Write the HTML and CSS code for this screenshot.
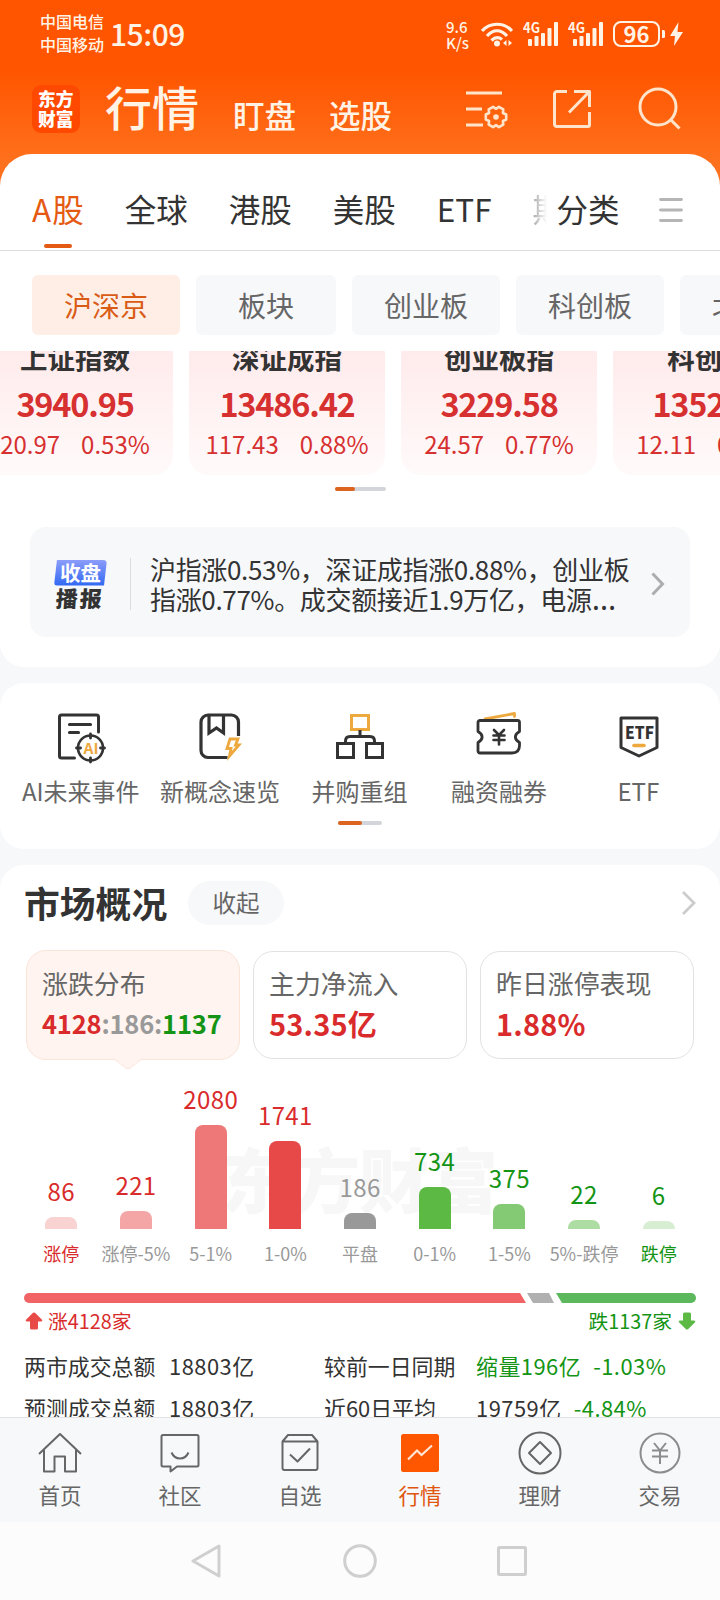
FILE: index.html
```html
<!DOCTYPE html>
<html lang="zh-CN">
<head>
    <meta charset="UTF-8">
    <meta name="viewport" content="width=device-width, initial-scale=1.0">
    <title>行情</title>
    <link rel="stylesheet" href="styles.css">
</head>
<body>
    <header class="top">
        <div class="status">
            <div class="carrier">中国电信<br>中国移动</div>
            <div class="clock">15:09</div>
            <div class="speed">9.6<br>K/s</div>
            <svg class="wifi" width="32" height="26" viewBox="0 0 32 26" fill="none" stroke="#fff3e6" stroke-width="3.200">
                <path d="M1 10C9 1 23 1 31 10"/>
                <path d="M6 15C12 8 20 8 26 15"/>
                <path d="M10.500 19.500C14 16 18 16 21 18.500"/>
                <circle cx="16" cy="22.500" r="3" fill="#fff3e6" stroke="none"/>
                <path d="M22 22l3.500-3v6zM31 22l-3.500-3v6z" fill="#fff3e6" stroke="none"/>
            </svg>
            <svg class="signal" width="36" height="26" viewBox="0 0 36 26" fill="#fff3e6">
                <text x="0" y="12" font-size="14" font-weight="bold" textLength="17" lengthAdjust="spacingAndGlyphs">4G</text>
                <rect x="5" y="18" width="4" height="7" rx="1"/>
                <rect x="11.500" y="15" width="4" height="10" rx="1"/>
                <rect x="18" y="12" width="4" height="13" rx="1"/>
                <rect x="24.500" y="7" width="4" height="18" rx="1"/>
                <rect x="31" y="1" width="4" height="24" rx="1"/>
            </svg>
            <svg class="signal" width="36" height="26" viewBox="0 0 36 26" fill="#fff3e6">
                <text x="0" y="12" font-size="14" font-weight="bold" textLength="17" lengthAdjust="spacingAndGlyphs">4G</text>
                <rect x="5" y="18" width="4" height="7" rx="1"/>
                <rect x="11.500" y="15" width="4" height="10" rx="1"/>
                <rect x="18" y="12" width="4" height="13" rx="1"/>
                <rect x="24.500" y="7" width="4" height="18" rx="1"/>
                <rect x="31" y="1" width="4" height="24" rx="1"/>
            </svg>
            <div class="battery">96</div>
            <svg width="22" height="26" viewBox="0 0 22 26" fill="#fff3e6">
                <path d="M0 9h1.500a1.500 1.500 0 0 1 1.500 1.500v5a1.500 1.500 0 0 1-1.500 1.500H0z"/>
                <path d="M16.500 1L8 15h5l-1 10 9-14h-5.500z"/>
            </svg>
        </div>

        <div class="titlebar">
            <div class="logo">东方<br>财富</div>
            <h1>行情</h1>
            <a class="title-link">盯盘</a>
            <a class="title-link">选股</a>
            <div class="tools">
                <svg width="42" height="40" viewBox="0 0 42 40" fill="none" stroke="#ffe4cc" stroke-width="3">
                    <path d="M0 4h36M0 20h16M0 36h17"/>
                    <path d="M36.900 32L37.300 35.600 32.900 38.100 30 36.200 27.100 38.100 22.700 35.600 23.100 32 19.800 30.500V25.500L23.100 24 22.700 20.400 27.100 17.900 30 19.800 32.900 17.900 37.300 20.400 36.900 24 40.200 25.500V30.500z" stroke-width="2.600" stroke-linejoin="round"/>
                    <circle cx="30" cy="28" r="2.800" fill="#ffe4cc" stroke="none"/>
                </svg>
                <svg width="40" height="40" viewBox="1 0 40 40" fill="none" stroke="#ffe4cc" stroke-width="3" stroke-linejoin="round">
                    <path d="M15 2.500H5a2.500 2.500 0 0 0-2.500 2.500v30a2.500 2.500 0 0 0 2.500 2.500h31a1.500 1.500 0 0 0 1.500-1.500V23"/>
                    <path d="M22 2.500h15.500V18M37 3L17 23.500"/>
                </svg>
                <svg width="44" height="44" viewBox="0 0 44 44" fill="none" stroke="#ffe4cc" stroke-width="3">
                    <circle cx="20" cy="20" r="18"/>
                    <path d="M32.500 32.500l9 9"/>
                </svg>
            </div>
        </div>
    </header>

    <main>
        <section class="panel market">
            <nav class="tabs">
                <a class="tab active"><span class="latin">A</span>股</a>
                <a class="tab">全球</a>
                <a class="tab">港股</a>
                <a class="tab">美股</a>
                <a class="tab">ETF</a>
                <span class="tab cut">期</span>
                <a class="tab sort">分类</a>
                <svg width="24" height="24" viewBox="0 0 24 24" stroke="#b5b5b5" stroke-width="2.800" stroke-linecap="round">
                    <path d="M1.500 1.500h21M1.500 12h21M1.500 22.500h21"/>
                </svg>
            </nav>

            <div class="chips">
                <span class="chip active">沪深京</span>
                <span class="chip narrow">板块</span>
                <span class="chip">创业板</span>
                <span class="chip">科创板</span>
                <span class="chip last">北证</span>
            </div>

            <div class="indexes">
                <div class="index">
                    <h3>上证指数</h3>
                    <b>3940.95</b>
                    <p><span>20.97</span><span>0.53%</span></p>
                </div>
                <div class="index">
                    <h3>深证成指</h3>
                    <b>13486.42</b>
                    <p><span>117.43</span><span>0.88%</span></p>
                </div>
                <div class="index">
                    <h3>创业板指</h3>
                    <b>3229.58</b>
                    <p><span>24.57</span><span>0.77%</span></p>
                </div>
                <div class="index">
                    <h3>科创50</h3>
                    <b>1352.31</b>
                    <p><span>12.11</span><span>0.90%</span></p>
                </div>
            </div>
            <div class="dots"><i></i></div>

            <div class="news">
                <div class="badge">
                    <span class="badge-top">收盘</span>
                    <span class="badge-bottom">播报</span>
                </div>
                <p>沪指涨0.53%，深证成指涨0.88%，创业板<br>指涨0.77%。成交额接近1.9万亿，电源<span class="more">…</span></p>
                <svg width="14" height="24" viewBox="0 0 14 24" fill="none" stroke="#adadad" stroke-width="3">
                    <path d="M1.500 1.500L11.500 12 1.500 22.500"/>
                </svg>
            </div>
        </section>

        <section class="panel quick">
            <div class="quick-row">
                <div class="quick-item">
                    <svg width="52" height="52" viewBox="1.500 0 52 52" fill="none" stroke="#333" stroke-width="3" stroke-linecap="round" stroke-linejoin="round">
                        <path d="M21 46H8a2 2 0 0 1-2-2V5a2 2 0 0 1 2-2h35a2 2 0 0 1 2 2v15"/>
                        <path d="M16 12.500h21M16 20.500h9" stroke-width="3.200"/>
                        <circle cx="37" cy="36" r="12.500" stroke-width="2.600"/>
                        <path d="M37 22v4M37 46v4M23 36h4M47 36h4" stroke-width="2.800"/>
                        <text x="30" y="41.500" class="ai-text" textLength="15" lengthAdjust="spacingAndGlyphs">AI</text>
                    </svg>
                    <span>AI未来事件</span>
                </div>
                <div class="quick-item">
                    <svg width="52" height="52" viewBox="0.500 0 52 52" fill="none" stroke="#333" stroke-width="3.200">
                        <path d="M34 45.500H14.500a7 7 0 0 1-7-7V10a7 7 0 0 1 7-7H38a7 7 0 0 1 7 7v14"/>
                        <path d="M15.500 3v18l7.500-5 7 5V3"/>
                        <path d="M36.500 27h8l-2.500 6h3.500L36 44l1.500-7.500h-4z" stroke="#eda93e" stroke-width="2.800"/>
                    </svg>
                    <span>新概念速览</span>
                </div>
                <div class="quick-item">
                    <svg width="52" height="52" viewBox="0 0 52 52" fill="none" stroke="#333" stroke-width="3">
                        <rect x="17.500" y="3.500" width="17" height="14" stroke="#eda93e"/>
                        <path d="M26 18v6M11.500 31v-2q0-4.500 4.500-4.500h20q4.500 0 4.500 4.500v2"/>
                        <rect x="3.500" y="31.500" width="16" height="14"/>
                        <rect x="32.500" y="31.500" width="16" height="14"/>
                    </svg>
                    <span>并购重组</span>
                </div>
                <div class="quick-item">
                    <svg width="52" height="52" viewBox="-1 0 52 52" fill="none" stroke="#333" stroke-width="2.800" stroke-linejoin="round" stroke-linecap="round">
                        <path d="M11 7l29.500-5.500v3" stroke="#eda93e"/>
                        <path d="M6 8.500h37.500a2 2 0 0 1 2 2v9c-5.500 3-5.500 8 0 11v3c0 5-2.500 7.500-7.500 7.500H6a2 2 0 0 1-2-2v-8.500c5.500-3 5.500-8 0-11v-9a2 2 0 0 1 2-2z"/>
                        <path d="M20 18l5 5 5-5M19.500 23.500h11M19.500 28h11M25 23.500v9" stroke-width="2.600"/>
                    </svg>
                    <span>融资融券</span>
                </div>
                <div class="quick-item">
                    <svg width="52" height="52" viewBox="-1 0 52 52" fill="none" stroke="#333" stroke-width="3" stroke-linejoin="round">
                        <path d="M8 6h36v29.500L26 44 8 35.500z"/>
                        <text x="12" y="27" class="etf-text" textLength="29" lengthAdjust="spacingAndGlyphs">ETF</text>
                        <path d="M21 33.500h10" stroke="#eda93e" stroke-width="3.600" stroke-linecap="round"/>
                    </svg>
                    <span>ETF</span>
                </div>
            </div>
            <div class="dots small"><i></i></div>
        </section>

        <section class="panel overview">
            <div class="overview-head">
                <h2>市场概况</h2>
                <span class="fold">收起</span>
                <svg width="14" height="24" viewBox="0 0 14 24" fill="none" stroke="#ccc" stroke-width="2.800">
                    <path d="M1 1l11 11L1 23"/>
                </svg>
            </div>

            <div class="cards">
                <div class="card active">
                    <h4>涨跌分布</h4>
                    <p class="split"><span class="up">4128</span>:186:<span class="down">1137</span></p>
                    <svg class="pointer" width="26" height="10" viewBox="0 0 26 10">
                        <path d="M0 0h26l-9.500 8q-1 1.300-2.500 1.300h-2q-1.500 0-2.500-1.300z" fill="#fff4ef"/>
                        <path d="M0 .5l9.500 7.500q1 1.300 2.500 1.300h2q1.500 0 2.500-1.300L26 .5" fill="none" stroke="#fbe5d9"/>
                    </svg>
                </div>
                <div class="card">
                    <h4>主力净流入</h4>
                    <p class="up">53.35亿</p>
                </div>
                <div class="card">
                    <h4>昨日涨停表现</h4>
                    <p class="up">1.88%</p>
                </div>
            </div>

            <div class="chart">
                <div class="watermark">东方财富</div>
                <div class="col up"><span>86</span><i class="bar r1" style="height: 12px"></i><em>涨停</em></div>
                <div class="col up"><span>221</span><i class="bar r2" style="height: 18px"></i><em class="gray">涨停-5%</em></div>
                <div class="col up"><span>2080</span><i class="bar r3" style="height: 104px"></i><em class="gray">5-1%</em></div>
                <div class="col up"><span>1741</span><i class="bar r4" style="height: 88px"></i><em class="gray">1-0%</em></div>
                <div class="col gray"><span>186</span><i class="bar flat" style="height: 16px"></i><em>平盘</em></div>
                <div class="col down"><span>734</span><i class="bar g4" style="height: 42px"></i><em class="gray">0-1%</em></div>
                <div class="col down"><span>375</span><i class="bar g3" style="height: 25px"></i><em class="gray">1-5%</em></div>
                <div class="col down"><span>22</span><i class="bar g2" style="height: 9px"></i><em class="gray">5%-跌停</em></div>
                <div class="col down"><span>6</span><i class="bar g1" style="height: 8px"></i><em>跌停</em></div>
            </div>

            <div class="ratio">
                <i class="ratio-up"></i>
                <i class="ratio-flat"></i>
                <i class="ratio-down"></i>
            </div>
            <div class="ratio-text">
                <span class="up">
                    <svg width="18" height="18" viewBox="0 0 18 18" fill="#e84a48"><path d="M8 .8q1-.8 2 0l7 7q1 1.700-1 1.700h-3V16q0 1.500-1.500 1.500h-5Q5 17.500 5 16V9.500H2Q0 9.500 1 7.800z"/></svg>
                    涨4128家
                </span>
                <span class="down">
                    跌1137家
                    <svg width="18" height="18" viewBox="0 0 18 18" fill="#5bb944"><path d="M8 17.200q1 .8 2 0l7-7q1-1.700-1-1.700h-3V2Q13 .5 11.500.5h-5Q5 .5 5 2v6.500H2q-2 0-1 1.700z"/></svg>
                </span>
            </div>

            <div class="totals">
                <span>两市成交总额</span>
                <span class="num">18803亿</span>
                <span>较前一日同期</span>
                <span class="num down">缩量196亿<b>-1.03%</b></span>
                <span>预测成交总额</span>
                <span class="num">18803亿</span>
                <span>近60日平均</span>
                <span class="num">19759亿<b class="down">-4.84%</b></span>
            </div>
        </section>
    </main>

    <nav class="bottom">
        <a>
            <svg width="44" height="44" viewBox="0 0 44 44" fill="none" stroke="#666" stroke-width="2" stroke-linejoin="round">
                <path d="M1 23L22 3l21 20"/>
                <path d="M6 19v21.500h10.500V25.500h10.500v15h11V19"/>
            </svg>
            首页
        </a>
        <a>
            <svg width="44" height="44" viewBox="0 0 44 44" fill="none" stroke="#666" stroke-width="2" stroke-linejoin="round">
                <path d="M5 4h34a1.500 1.500 0 0 1 1.500 1.500V34a1.500 1.500 0 0 1-1.500 1.500H19L12.500 40.500v-5H5A1.500 1.500 0 0 1 3.500 34V5.500A1.500 1.500 0 0 1 5 4z"/>
                <path d="M13.500 21.500c3.500 8 13.500 8 17 0"/>
            </svg>
            社区
        </a>
        <a>
            <svg width="44" height="44" viewBox="0 0 44 44" fill="none" stroke="#666" stroke-width="2" stroke-linejoin="round">
                <path d="M4.500 10.500h35V37a2 2 0 0 1-2 2h-31a2 2 0 0 1-2-2zM4.500 10.500L10 4h24l5.500 6.500"/>
                <path d="M12 23.500l7.500 7L32 17.500"/>
            </svg>
            自选
        </a>
        <a class="active">
            <svg width="44" height="44" viewBox="0 0 44 44" fill="none">
                <rect x="3" y="3" width="38" height="38" rx="2.500" fill="#ff5600"/>
                <path d="M10 28.500l9-9 4.500 4.500L34 14.500" stroke="#ffe6d5" stroke-width="2.200"/>
            </svg>
            行情
        </a>
        <a>
            <svg width="44" height="44" viewBox="0 0 44 44" fill="none" stroke="#666" stroke-width="2" stroke-linejoin="round">
                <circle cx="22" cy="22" r="20.500"/>
                <path d="M22 11l11 11-11 11-11-11z"/>
            </svg>
            理财
        </a>
        <a>
            <svg width="44" height="44" viewBox="0 0 44 44" fill="none" stroke="#8c8c8c" stroke-width="2">
                <circle cx="22" cy="22" r="19.500"/>
                <path d="M16 12l6 7.500 6-7.500M14 19.500h16M14 25.500h16M22 19.500V33"/>
            </svg>
            交易
        </a>
    </nav>

    <footer class="system">
        <svg width="34" height="36" viewBox="2 0 34 36" fill="none" stroke="#cfcfcf" stroke-width="3" stroke-linejoin="round">
            <path d="M30 3v30L4 18z"/>
        </svg>
        <svg width="34" height="34" viewBox="0 0 34 34" fill="none" stroke="#cfcfcf" stroke-width="3">
            <circle cx="17" cy="17" r="15.300"/>
        </svg>
        <svg width="34" height="34" viewBox="0 0 34 34" fill="none" stroke="#cfcfcf" stroke-width="3">
            <rect x="3.500" y="3.500" width="27" height="27" rx="1"/>
        </svg>
    </footer>
</body>
</html>
```

FILE: styles.css
```css
* {
    box-sizing: border-box;
    margin: 0;
    padding: 0;
}

body {
    width: 720px;
    height: 1600px;
    overflow: hidden;
    display: flex;
    flex-direction: column;
    font-family: "Noto Sans CJK SC", sans-serif;
    color: #333;
    background: #f6f8fa;
}

svg {
    display: block;
    flex: none;
}

i, em {
    font-style: normal;
}

.up {
    color: #d92b2b;
}

.down {
    color: #149414;
}

.gray {
    color: #999;
}

/* header */
.top {
    height: 190px;
    flex: none;
    background: linear-gradient(#ff5500 70px, #ff701c 160px);
}

.status {
    height: 68px;
    padding-left: 40px;
    display: flex;
    align-items: center;
    color: #fff3e6;
}

.carrier {
    width: 70px;
    font-size: 16px;
    font-weight: 500;
    line-height: 23px;
    margin-bottom: 3px;
}

.clock {
    width: 336px;
    font-size: 30px;
    font-weight: 500;
    line-height: 40px;
    letter-spacing: -0.5px;
    margin-bottom: 3px;
}

.speed {
    width: 35px;
    font-size: 15px;
    font-weight: 500;
    line-height: 15.5px;
    margin-top: 1px;
}

.wifi {
    margin-right: 10px;
}

.signal {
    margin-right: 9px;
}

.battery {
    width: 47px;
    height: 26px;
    border: 2px solid #fff3e6;
    border-radius: 8px;
    font-size: 22px;
    font-weight: bold;
    line-height: 20px;
    text-align: center;
    margin-right: 2px;
}

.titlebar {
    height: 82px;
    padding-left: 32px;
    display: flex;
    align-items: center;
}

.logo {
    width: 48px;
    height: 48px;
    padding: 4px 0 0 6px;
    border-radius: 9px;
    background: #ff4800;
    color: #fff;
    font-size: 17.7px;
    font-weight: 900;
    line-height: 19.5px;
}

h1 {
    width: 128px;
    margin: 0 0 7px 25px;
    color: #fff3e6;
    font-size: 47px;
    font-weight: 500;
    line-height: 60px;
}

.title-link {
    width: 96px;
    margin-top: 10px;
    color: #fff3e6;
    font-size: 31.5px;
    font-weight: 500;
    line-height: 40px;
}

.tools {
    display: flex;
    align-items: center;
    gap: 45px;
    margin-left: 41px;
}

/* white blocks */
main {
    flex: 1;
    min-height: 0;
    margin-top: -36px;
    overflow: hidden;
    display: flex;
    flex-direction: column;
    gap: 16px;
}

.panel {
    flex: none;
    background: #fff;
    border-radius: 24px;
}

.market {
    height: 513px;
    border-top-left-radius: 32px;
    border-top-right-radius: 32px;
}

.tabs {
    height: 97px;
    padding: 12px 0 0 32px;
    display: flex;
    align-items: center;
    gap: 41px;
    border-bottom: 1px solid #ddd;
}

.tabs svg {
    margin: 4px 0 0 -2px;
}

.tab {
    position: relative;
    font-size: 31.5px;
    line-height: 40px;
}

.tab.active {
    color: #e55a12;
}

.tab .latin {
    letter-spacing: 1px;
}

.tab.active::after {
    content: "";
    position: absolute;
    left: 12px;
    bottom: -20px;
    width: 28px;
    height: 4px;
    border-radius: 2px;
    background: #e55a12;
}

.tab.cut {
    width: 14px;
    overflow: hidden;
    color: #aaa;
    -webkit-mask-image: linear-gradient(to right, #000, transparent);
    mask-image: linear-gradient(to right, #000, transparent);
}

.tab.sort {
    margin-left: -31px;
}

.chips {
    display: flex;
    gap: 16px;
    padding: 24px 0 16px 32px;
    overflow: hidden;
}

.chip {
    flex: none;
    width: 148px;
    height: 60px;
    border-radius: 6px;
    background: #f7f8fa;
    color: #666;
    font-size: 28px;
    line-height: 60px;
    text-align: center;
}

.chip.narrow {
    width: 140px;
}

.chip.last {
    width: 120px;
}

.chip.active {
    background: #ffeee5;
    color: #d95b16;
}

.indexes {
    height: 124px;
    margin-left: -23px;
    overflow: hidden;
    display: flex;
    align-items: flex-end;
    gap: 16px;
}

.index {
    flex: none;
    width: 196px;
    height: 140px;
    padding-top: 7px;
    border-radius: 20px;
    background: linear-gradient(#ffe9ea, #fffafa);
    color: #d63030;
    text-align: center;
}

.index h3 {
    color: #333;
    font-size: 27.5px;
    line-height: 30px;
}

.index b {
    display: block;
    margin-top: 14px;
    font-size: 32.5px;
    line-height: 34px;
    letter-spacing: -1.2px;
}

.index p {
    display: flex;
    justify-content: center;
    gap: 21px;
    margin-top: 10px;
    font-size: 24px;
    line-height: 28px;
}

.dots {
    width: 51px;
    height: 4px;
    margin: 12px auto 0 335px;
    border-radius: 2px;
    background: #d2d6da;
}

.dots i {
    display: block;
    width: 20px;
    height: 4px;
    border-radius: 2px;
    background: #dc641f;
}

.news {
    height: 110px;
    margin: 36px 30px 0;
    padding: 3px 0 0 24px;
    display: flex;
    align-items: center;
    border-radius: 16px;
    background: #f7f8fa;
}

.news p {
    width: 501px;
    height: 60px;
    margin-left: 19px;
    font-size: 26px;
    line-height: 30px;
    letter-spacing: -0.33px;
    white-space: nowrap;
}

.news .more {
    font-family: "Noto Sans", sans-serif;
    font-size: 31px;
    line-height: 20px;
}

.badge {
    width: 77px;
    height: 52px;
    border-right: 1px solid #ddd;
    padding-top: 2px;
}

.badge-top {
    display: block;
    width: 53px;
    height: 26px;
    border-radius: 4px;
    background: linear-gradient(#8c9dfa, #2f68f3);
    clip-path: polygon(3px 0, 100% 0, 50px 100%, 0 100%);
    color: #fff;
    font-size: 20.5px;
    font-weight: bold;
    line-height: 24px;
    text-align: center;
}

.badge-bottom {
    display: block;
    margin-left: 2px;
    font-size: 22px;
    font-weight: 900;
    line-height: 23px;
    letter-spacing: 2px;
    transform: skewX(-4deg);
}

/* shortcuts */
.quick {
    height: 166px;
    padding-top: 29px;
}

.quick-row {
    display: flex;
    padding: 0 12px 0 11px;
}

.quick-item {
    flex: 1;
    display: flex;
    flex-direction: column;
    align-items: center;
    color: #666;
    font-size: 24px;
    line-height: 30px;
    white-space: nowrap;
}

.quick-item span {
    margin-top: 12px;
}

.ai-text {
    fill: #eda93e;
    stroke: none;
    font-size: 15px;
    font-weight: bold;
}

.etf-text {
    fill: #333;
    stroke: none;
    font-size: 17px;
    font-weight: 900;
}

.dots.small {
    width: 44px;
    margin: 15px auto 0 338px;
}

.dots.small i {
    width: 24px;
}

/* market overview */
.overview {
    height: 620px;
    padding: 16px 24px 0;
}

.overview-head {
    display: flex;
    align-items: center;
    height: 44px;
}

.overview-head h2 {
    width: 164px;
    font-size: 35.8px;
    line-height: 40px;
    margin-bottom: 2px;
}

.overview-head svg {
    margin: 0 0 0 auto;
}

.fold {
    width: 96px;
    height: 44px;
    border-radius: 22px;
    background: #f7f8fa;
    color: #666;
    font-size: 23.5px;
    line-height: 43px;
    text-align: center;
}

.cards {
    display: flex;
    gap: 13px;
    padding: 25px 2px 0;
}

.card {
    position: relative;
    width: 214px;
    height: 108px;
    margin-top: 1px;
    padding: 16px 0 0 15px;
    border: 1px solid #e2e2e2;
    border-radius: 20px;
}

.card.active {
    height: 110px;
    margin-top: 0;
    padding-top: 17px;
    border-color: #fbe5d9;
    background: #fff4ef;
}

.card h4 {
    color: #666;
    font-size: 25.9px;
    font-weight: normal;
    line-height: 30px;
}

.card p {
    margin-top: 8px;
    font-size: 29px;
    font-weight: bold;
    line-height: 34px;
    letter-spacing: 0.2px;
}

.card p.split {
    color: #999;
    font-size: 25.5px;
    letter-spacing: -0.2px;
}

.pointer {
    position: absolute;
    left: 88px;
    top: 108px;
}

.chart {
    position: relative;
    height: 184px;
    margin-top: 20px;
    display: flex;
    align-items: flex-end;
}

.watermark {
    position: absolute;
    left: 197px;
    top: 53px;
    color: #f7f7f7;
    font-size: 70px;
    font-weight: 900;
    line-height: 90px;
    letter-spacing: -1px;
}

.col {
    position: relative;
    flex: 1;
    width: 0;
    display: flex;
    flex-direction: column;
    align-items: center;
}

.col span {
    margin-bottom: 14px;
    font-size: 24px;
    line-height: 24px;
    letter-spacing: 0.4px;
}

.bar {
    width: 32px;
    border-radius: 8px 8px 0 0;
}

.r1 { background: #f9d2d2; }
.r2 { background: #f4a5a6; }
.r3 { background: #ee7777; }
.r4 { background: #e74848; }
.flat { background: #999; }
.g4 { background: #5cb944; }
.g3 { background: #84ca74; }
.g2 { background: #aedda3; }
.g1 { background: #d7eed2; }

.col em {
    margin-top: 14px;
    font-size: 18px;
    line-height: 21px;
    white-space: nowrap;
}

.ratio {
    display: flex;
    height: 10px;
    margin-top: 29px;
}

.ratio-up {
    width: 502px;
    border-radius: 5px 0 0 5px;
    background: #f26365;
    clip-path: polygon(0 0, 496px 0, 100% 100%, 0 100%);
}

.ratio-flat {
    width: 27px;
    margin-left: 1px;
    background: #b0b0b0;
    clip-path: polygon(0 0, 22px 0, 100% 100%, 6px 100%);
}

.ratio-down {
    flex: 1;
    margin-left: 2px;
    border-radius: 0 5px 5px 0;
    background: #5cb85c;
    clip-path: polygon(0 0, 100% 0, 100% 100%, 6px 100%);
}

.ratio-text {
    display: flex;
    justify-content: space-between;
    margin-top: 5px;
    font-size: 19.8px;
    line-height: 25px;
}

.ratio-text span {
    display: flex;
    align-items: center;
    gap: 6px;
}

.ratio-text .up {
    padding-left: 1px;
    gap: 5px;
}

.totals {
    display: grid;
    grid-template-columns: 145px 155px 152px auto;
    margin-top: 12px;
    font-size: 21.9px;
    line-height: 42px;
    white-space: nowrap;
}

.totals .num {
    letter-spacing: 0.5px;
}

.totals b {
    font-weight: inherit;
    margin-left: 12px;
}

/* bottom bars */
.bottom {
    flex: none;
    height: 105px;
    display: flex;
    padding-top: 13px;
    border-top: 1px solid #e2e3e6;
    background: #f7f8fa;
}

.bottom a {
    flex: 1;
    display: flex;
    flex-direction: column;
    align-items: center;
    color: #666;
    font-size: 21.5px;
    line-height: 40px;
}

.bottom .active {
    color: #e0560f;
}

.system {
    flex: none;
    height: 78px;
    display: flex;
    justify-content: center;
    align-items: center;
    gap: 118px;
    background: #fcfcfc;
}
```
